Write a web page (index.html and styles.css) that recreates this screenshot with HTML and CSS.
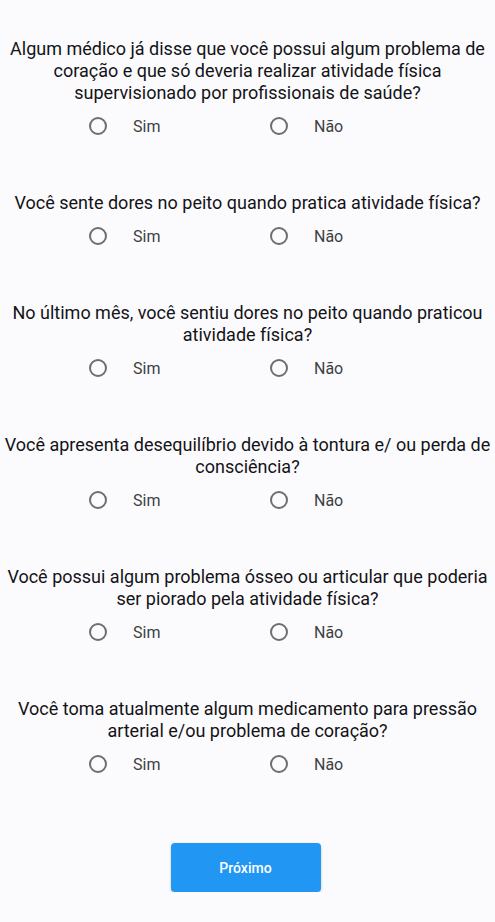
FILE: index.html
```html
<!DOCTYPE html>
<html lang="pt-BR">

<head>
  <meta charset="UTF-8">
  <meta name="viewport" content="width=device-width, initial-scale=1.0">
  <title>Questionário</title>
  <link rel="stylesheet" href="styles.css">
</head>

<body>
  <div class="form">
    <div class="question">
      <p class="text">Algum médico já disse que você possui algum problema de coração e que só deveria realizar atividade física supervisionado por profissionais de saúde?</p>
      <div class="options">
        <label class="option"><input type="radio" name="q1" /><span>Sim</span></label>
        <label class="option"><input type="radio" name="q1" /><span>Não</span></label>
      </div>
    </div>
    <div class="question">
      <p class="text">Você sente dores no peito quando pratica atividade física?</p>
      <div class="options">
        <label class="option"><input type="radio" name="q2" /><span>Sim</span></label>
        <label class="option"><input type="radio" name="q2" /><span>Não</span></label>
      </div>
    </div>
    <div class="question">
      <p class="text">No último mês, você sentiu dores no peito quando praticou atividade física?</p>
      <div class="options">
        <label class="option"><input type="radio" name="q3" /><span>Sim</span></label>
        <label class="option"><input type="radio" name="q3" /><span>Não</span></label>
      </div>
    </div>
    <div class="question">
      <p class="text">Você apresenta desequilíbrio devido à tontura e/ ou perda de consciência?</p>
      <div class="options">
        <label class="option"><input type="radio" name="q4" /><span>Sim</span></label>
        <label class="option"><input type="radio" name="q4" /><span>Não</span></label>
      </div>
    </div>
    <div class="question">
      <p class="text">Você possui algum problema ósseo ou articular que poderia ser piorado pela atividade física?</p>
      <div class="options">
        <label class="option"><input type="radio" name="q5" /><span>Sim</span></label>
        <label class="option"><input type="radio" name="q5" /><span>Não</span></label>
      </div>
    </div>
    <div class="question">
      <p class="text">Você toma atualmente algum medicamento para pressão arterial e/ou problema de coração?</p>
      <div class="options">
        <label class="option"><input type="radio" name="q6" /><span>Sim</span></label>
        <label class="option"><input type="radio" name="q6" /><span>Não</span></label>
      </div>
    </div>
    <div class="actions">
      <button class="next" type="button">Próximo</button>
    </div>
  </div>
</body>

</html>
```

FILE: styles.css
```css
html,
body {
  margin: 0;
  background-color: #fbfbfe;
}

body {
  font-family: Roboto, "Liberation Sans", sans-serif;
}

.form {
  display: flex;
  flex-direction: column;
  gap: 46px;
  padding: 38px 4px 0;
}

.question {
  display: flex;
  flex-direction: column;
  gap: 2px;
}

.text {
  margin: 0;
  font-size: 18px;
  line-height: 22px;
  text-align: center;
  color: #141316;
}

.options {
  display: flex;
  height: 40px;
  padding-left: 74px;
}

.option {
  width: 181px;
  display: flex;
  align-items: center;
  gap: 15px;
  font-size: 16px;
  color: #3f3f43;
}

.option input {
  appearance: none;
  width: 18px;
  height: 18px;
  margin: 11px;
  border: 2px solid #6e6e72;
  border-radius: 50%;
  box-sizing: border-box;
}

.actions {
  display: flex;
  justify-content: center;
  padding: 13px 4px 0 0;
}

.next {
  width: 150px;
  height: 49px;
  border: none;
  border-radius: 4px;
  background-color: #2196f3;
  color: #ffffff;
  font-family: Roboto, "Liberation Sans", sans-serif;
  font-size: 14px;
  font-weight: 500;
  box-shadow: 0 1px 3px rgba(0, 0, 0, 0.2);
}
```
